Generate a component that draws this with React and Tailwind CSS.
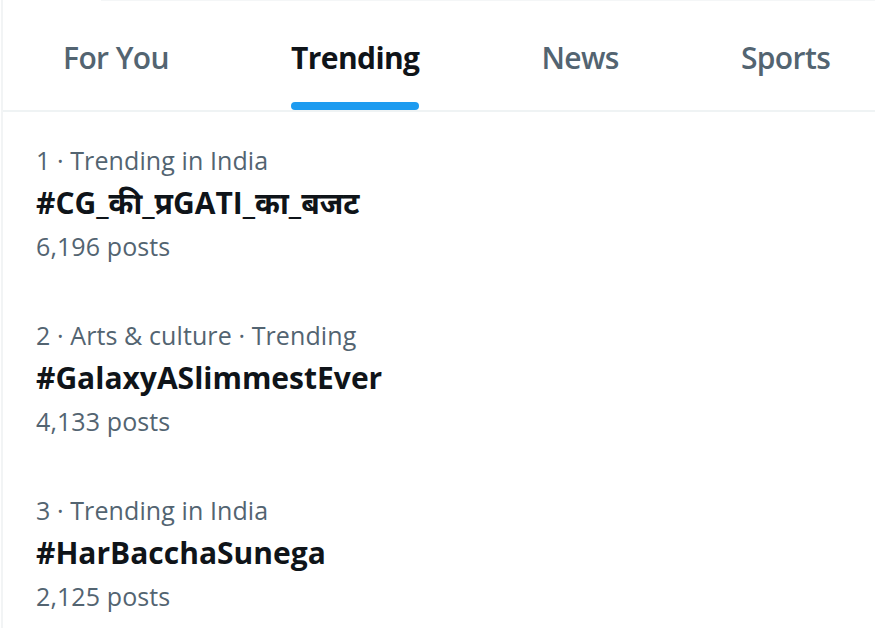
import React from 'react';

const tabs = ['For You', 'Trending', 'News', 'Sports'];

const trends = [
  { meta: '1 · Trending in India', tag: '#CG_की_प्रGATI_का_बजट', posts: '6,196 posts' },
  { meta: '2 · Arts & culture · Trending', tag: '#GalaxyASlimmestEver', posts: '4,133 posts' },
  { meta: '3 · Trending in India', tag: '#HarBacchaSunega', posts: '2,125 posts' },
];

export default function App() {
  return (
    <div className="w-[875px] h-[628px] overflow-hidden bg-white" style={{ fontFamily: '"Open Sans", "Noto Sans", "Noto Sans Devanagari", sans-serif' }}>
      <div className="h-full border-l-2 border-[#f2f4f5] ml-[1px]">
        {/* Tabs */}
        <div className="border-t border-[#f4f6f7] ml-[98px] h-[6px]" />
        <div className="flex border-b-2 border-[#eff3f4]">
          {tabs.map((t, i) => (
            <div key={t} className="flex shrink-0 flex-col items-center px-[61px] pt-[32px] first:pl-[60px]">
              <span
                className={`whitespace-nowrap text-[30px] leading-[40px] tracking-[-0.6px] ${
                  i === 1 ? 'font-bold text-[#0f1419]' : 'font-semibold text-[#536471]'
                }`}
              >
                {t}
              </span>
              <div className={`mt-[24px] h-[8px] w-full rounded-full ${i === 1 ? 'bg-[#1d9bf0]' : 'bg-transparent'}`} />
            </div>
          ))}
        </div>

        {/* Trends */}
        <div className="pl-[33px] pt-[26px]">
          {trends.map((t) => (
            <div key={t.tag} className="flex flex-col h-[175px]">
              <span className="text-[25px] leading-[44px] tracking-[0.1px] text-[#536471]">{t.meta}</span>
              <span className="text-[30px] leading-[42px] font-bold text-[#0f1419]">{t.tag}</span>
              <span className="text-[25px] leading-[44px] tracking-[0.1px] text-[#536471]">{t.posts}</span>
            </div>
          ))}
        </div>
      </div>
    </div>
  );
}
